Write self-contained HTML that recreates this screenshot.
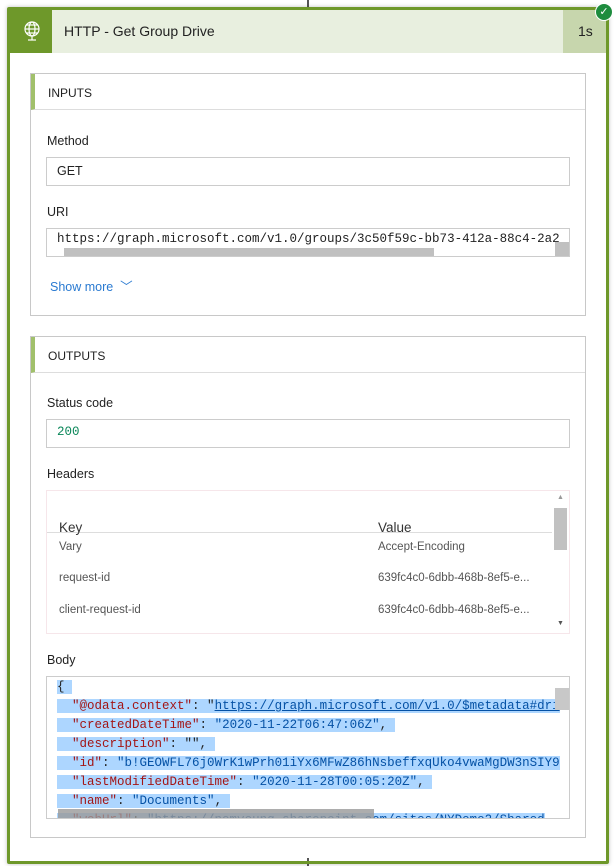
<!DOCTYPE html>
<html><head><meta charset="utf-8"><style>
*{box-sizing:border-box;margin:0;padding:0}
body{width:615px;height:866px;background:#fff;font-family:"Liberation Sans",sans-serif;position:relative;overflow:hidden;font-size:13px;color:#222}
.abs{position:absolute}
.card{left:7px;top:7px;width:602px;height:857px;border:3px solid #6e982a;border-radius:2px;box-shadow:0 0 4px rgba(0,0,0,.25)}
.lbl{position:absolute;left:47px;font-size:12.5px;color:#222}
.box{position:absolute;left:46px;width:524px;border:1px solid #ccc;background:#fff}
.mono{font-family:"Liberation Mono",monospace;font-size:12.5px}
.sec{position:absolute;left:30px;width:556px;border:1px solid #c8c8c8}
.sech{height:36px;border-bottom:1px solid #ddd;border-left:4px solid #a1c06b;padding:12px 0 0 13px;font-size:12px;color:#222}
.jk{color:#a31515}.jv{color:#0451a5}
.sel{background:#add6ff}
</style></head><body>
<div class="abs" style="left:307px;top:0;width:2px;height:8px;background:#555"></div>
<div class="abs" style="left:307px;top:858px;width:2px;height:8px;background:#555"></div>
<div class="abs card"></div>
<div class="abs" style="left:10px;top:10px;width:596px;height:43px;background:#e8efdf"></div>
<div class="abs" style="left:10px;top:10px;width:42px;height:43px;background:#6e982a"></div>
<svg class="abs" style="left:20px;top:19px" width="24" height="24" viewBox="0 0 24 24" fill="none" stroke="#fff" stroke-width="1.2"><circle cx="12" cy="10" r="7"/><ellipse cx="12" cy="10" rx="3" ry="7"/><line x1="5" y1="10" x2="19" y2="10"/><line x1="6" y1="6" x2="18" y2="6"/><line x1="6" y1="14" x2="18" y2="14"/><line x1="12" y1="17" x2="12" y2="21"/><line x1="8" y1="21" x2="16" y2="21"/></svg>
<div class="abs" style="left:64px;top:23px;font-size:14px;color:#222">HTTP - Get Group Drive</div>
<div class="abs" style="left:563px;top:10px;width:43px;height:43px;background:#c7d6ad"></div>
<div class="abs" style="left:578px;top:23px;font-size:14px">1s</div>
<div class="abs" style="left:595px;top:3px;width:18px;height:18px;border-radius:50%;background:#1e8c3e;border:1px solid #fff;color:#fff;font-size:11px;text-align:center;line-height:16px">✓</div>

<div class="sec" style="top:73px;height:243px"><div class="sech">INPUTS</div></div>
<div class="lbl" style="top:134px">Method</div>
<div class="box" style="top:157px;height:29px;padding:5px 10px" ><span style="font-size:12.5px">GET</span></div>
<div class="lbl" style="top:205px">URI</div>
<div class="box mono" style="top:228px;height:29px;padding:3px 0 0 10px;overflow:hidden;white-space:nowrap">https://graph.microsoft.com/v1.0/groups/3c50f59c-bb73-412a-88c4-2a2</div>
<div class="abs" style="left:64px;top:248px;width:370px;height:8px;background:#c0c0c0"></div>
<div class="abs" style="left:555px;top:242px;width:14px;height:14px;background:#c0c0c0"></div>
<div class="abs" style="left:50px;top:276px;color:#2a7ad1;font-size:12.5px">Show more &nbsp;﹀</div>

<div class="sec" style="top:336px;height:502px"><div class="sech">OUTPUTS</div></div>
<div class="lbl" style="top:396px">Status code</div>
<div class="box mono" style="top:419px;height:29px;padding:5px 10px;color:#098658">200</div>
<div class="lbl" style="top:467px">Headers</div>
<div class="box" style="top:490px;height:144px;border-color:#f6e6ea"></div>
<div class="abs" style="left:47px;top:532px;width:505px;height:1px;background:#ddd"></div>
<div class="abs" style="left:59px;top:520px;font-size:13.5px;color:#333">Key</div>
<div class="abs" style="left:378px;top:520px;font-size:13.5px;color:#333">Value</div>
<div class="abs" style="left:59px;top:541px;font-size:11.5px;color:#555">Vary</div>
<div class="abs" style="left:378px;top:541px;font-size:11.5px;color:#555">Accept-Encoding</div>
<div class="abs" style="left:59px;top:572px;font-size:11.5px;color:#555">request-id</div>
<div class="abs" style="left:378px;top:572px;font-size:11.5px;color:#555">639fc4c0-6dbb-468b-8ef5-e...</div>
<div class="abs" style="left:59px;top:604px;font-size:11.5px;color:#555">client-request-id</div>
<div class="abs" style="left:378px;top:604px;font-size:11.5px;color:#555">639fc4c0-6dbb-468b-8ef5-e...</div>
<div class="abs" style="left:554px;top:508px;width:13px;height:42px;background:#c1c1c1"></div>
<div class="abs" style="left:557px;top:494px;font-size:7px;color:#999">▲</div>
<div class="abs" style="left:557px;top:620px;font-size:7px;color:#555">▼</div>

<div class="lbl" style="top:653px">Body</div>
<div class="box mono" style="top:676px;height:143px;overflow:hidden;white-space:pre;line-height:19px;padding:1px 0 0 10px;border-color:#ccc"><span class="sel">{ </span>
<span class="sel">  <span class="jk">"@odata.context"</span>: "<span class="jv" style="text-decoration:underline">https://graph.microsoft.com/v1.0/$metadata#dri</span></span>
<span class="sel">  <span class="jk">"createdDateTime"</span>: <span class="jv">"2020-11-22T06:47:06Z"</span>, </span>
<span class="sel">  <span class="jk">"description"</span>: "", </span>
<span class="sel">  <span class="jk">"id"</span>: <span class="jv">"b!GEOWFL76j0WrK1wPrh01iYx6MFwZ86hNsbeffxqUko4vwaMgDW3nSIY9</span></span>
<span class="sel">  <span class="jk">"lastModifiedDateTime"</span>: <span class="jv">"2020-11-28T00:05:20Z"</span>, </span>
<span class="sel">  <span class="jk">"name"</span>: <span class="jv">"Documents"</span>, </span>
<span class="sel">  <span class="jk">"webUrl"</span>: <span class="jv">"https://nomyoung.sharepoint.com/sites/NYDemo2/Shared</span></span></div>
<div class="abs" style="left:58px;top:809px;width:316px;height:9px;background:#999;opacity:.8"></div>
<div class="abs" style="left:555px;top:688px;width:14px;height:22px;background:#c8c8c8"></div>
<div class="abs" style="left:555px;top:808px;width:14px;height:10px;background:#fff"></div>
</body></html>
